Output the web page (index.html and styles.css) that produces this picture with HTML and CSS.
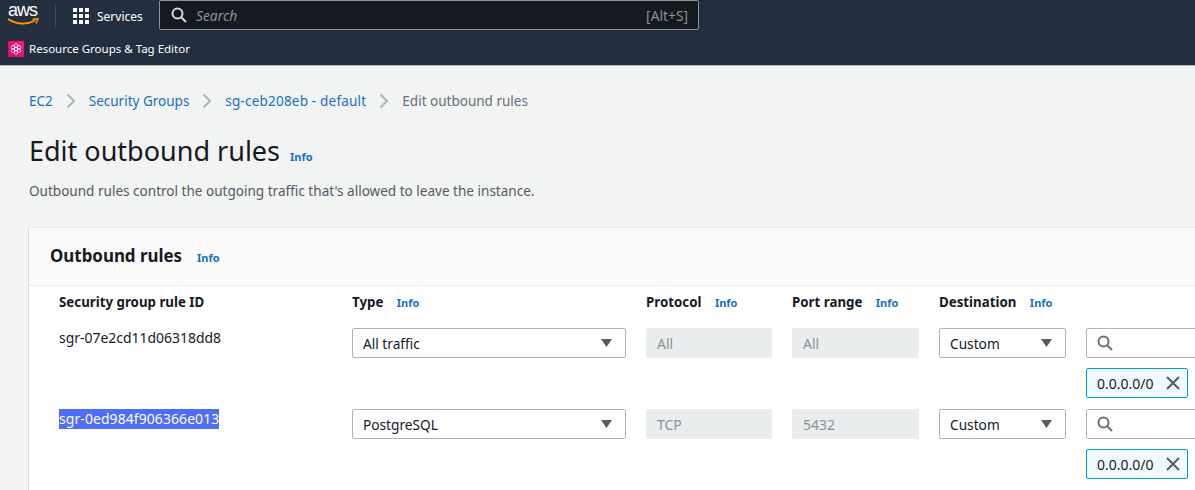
FILE: index.html
```html
<!DOCTYPE html>
<html lang="en">
<head>
<meta charset="UTF-8">
<title>Edit outbound rules</title>
<link rel="stylesheet" href="styles.css">
</head>
<body>
<header class="topbar">
  <div class="nav-row">
    <div class="aws-logo">
      <span class="aws-word">aws</span>
      <svg class="aws-smile" width="32" height="8" viewBox="0 0 32 8"><path d="M1 1C9 6.500 20 7 28 2.500" fill="none" stroke="#ff9900" stroke-width="1.800"/><path d="M25.500 1.200L31 .8L29 5.500" fill="none" stroke="#ff9900" stroke-width="1.500"/></svg>
    </div>
    <div class="nav-sep"></div>
    <div class="services">
      <svg width="16" height="16" viewBox="0 0 16 16" fill="#fff"><rect width="4" height="4"/><rect x="6" width="4" height="4"/><rect x="12" width="4" height="4"/><rect y="6" width="4" height="4"/><rect x="6" y="6" width="4" height="4"/><rect x="12" y="6" width="4" height="4"/><rect y="12" width="4" height="4"/><rect x="6" y="12" width="4" height="4"/><rect x="12" y="12" width="4" height="4"/></svg>
      <span>Services</span>
    </div>
    <div class="nav-search">
      <svg width="16" height="16" viewBox="0 0 16 16" fill="none" stroke="#d5dbdb" stroke-width="2"><circle cx="6.500" cy="6.500" r="5"/><path d="M10.500 10.500L15 15"/></svg>
      <span class="nav-search-text">Search</span>
      <span class="nav-search-key">[Alt+S]</span>
    </div>
  </div>
  <div class="fav-row">
    <span class="fav-icon">
      <svg width="12" height="12" viewBox="0 0 12 12" fill="none" stroke="#fff" stroke-width=".8"><circle cx="6" cy="6" r="1.800"/><circle cx="6" cy="2.600" r="1.800"/><circle cx="6" cy="9.400" r="1.800"/><circle cx="3" cy="4.300" r="1.800"/><circle cx="9" cy="4.300" r="1.800"/><circle cx="3" cy="7.700" r="1.800"/><circle cx="9" cy="7.700" r="1.800"/></svg>
    </span>
    <span>Resource Groups &amp; Tag Editor</span>
  </div>
</header>

<main class="content">
  <nav class="crumbs">
    <a>EC2</a>
    <svg class="crumb-arrow" width="10" height="16" viewBox="0 0 10 16"><path d="M1.500 1.500L8 8L1.500 14.500" fill="none" stroke="#aab7b8" stroke-width="2"/></svg>
    <a>Security Groups</a>
    <svg class="crumb-arrow" width="10" height="16" viewBox="0 0 10 16"><path d="M1.500 1.500L8 8L1.500 14.500" fill="none" stroke="#aab7b8" stroke-width="2"/></svg>
    <a class="crumb-group">sg-ceb208eb - default</a>
    <svg class="crumb-arrow" width="10" height="16" viewBox="0 0 10 16"><path d="M1.500 1.500L8 8L1.500 14.500" fill="none" stroke="#aab7b8" stroke-width="2"/></svg>
    <span class="crumb-current">Edit outbound rules</span>
  </nav>

  <div class="page-title">
    <h1>Edit outbound rules</h1>
    <a class="info">Info</a>
  </div>
  <p class="page-desc">Outbound rules control the outgoing traffic that's allowed to leave the instance.</p>

  <section class="card">
    <div class="card-head">
      <h2>Outbound rules</h2>
      <a class="info">Info</a>
    </div>
    <div class="rules">
      <div class="rule-grid rule-labels">
        <div class="label">Security group rule ID</div>
        <div class="label">Type <a class="info">Info</a></div>
        <div class="label">Protocol <a class="info">Info</a></div>
        <div class="label">Port range <a class="info">Info</a></div>
        <div class="label">Destination <a class="info">Info</a></div>
        <div></div>
      </div>

      <div class="rule-grid rule-row">
        <div class="rule-id"><span>sgr-07e2cd11d06318dd8</span></div>
        <div class="select">All traffic<svg class="caret" width="11" height="8" viewBox="0 0 12 8" preserveAspectRatio="none"><path d="M0 0H12L6 8Z" fill="#545b64"/></svg></div>
        <div class="readonly">All</div>
        <div class="readonly">All</div>
        <div class="select">Custom<svg class="caret" width="11" height="8" viewBox="0 0 12 8" preserveAspectRatio="none"><path d="M0 0H12L6 8Z" fill="#545b64"/></svg></div>
        <div class="dest">
          <div class="dest-input"><svg width="16" height="16" viewBox="0 0 16 16" fill="none" stroke="#687078" stroke-width="2"><circle cx="6.500" cy="6.500" r="5"/><path d="M10.500 10.500L15 15"/></svg></div>
          <div class="token">0.0.0.0/0<svg width="14" height="14" viewBox="0 0 14 14" fill="none" stroke="#545b64" stroke-width="2"><path d="M1 1L13 13M13 1L1 13"/></svg></div>
        </div>
      </div>

      <div class="rule-grid rule-row">
        <div class="rule-id"><span class="selected">sgr-0ed984f906366e013</span></div>
        <div class="select">PostgreSQL<svg class="caret" width="11" height="8" viewBox="0 0 12 8" preserveAspectRatio="none"><path d="M0 0H12L6 8Z" fill="#545b64"/></svg></div>
        <div class="readonly">TCP</div>
        <div class="readonly">5432</div>
        <div class="select">Custom<svg class="caret" width="11" height="8" viewBox="0 0 12 8" preserveAspectRatio="none"><path d="M0 0H12L6 8Z" fill="#545b64"/></svg></div>
        <div class="dest">
          <div class="dest-input"><svg width="16" height="16" viewBox="0 0 16 16" fill="none" stroke="#687078" stroke-width="2"><circle cx="6.500" cy="6.500" r="5"/><path d="M10.500 10.500L15 15"/></svg></div>
          <div class="token">0.0.0.0/0<svg width="14" height="14" viewBox="0 0 14 14" fill="none" stroke="#545b64" stroke-width="2"><path d="M1 1L13 13M13 1L1 13"/></svg></div>
        </div>
      </div>
    </div>
  </section>
</main>
</body>
</html>
```

FILE: styles.css
```css
html, body { margin: 0; height: 490px; overflow: hidden; }
body { font-family: "Noto Sans", sans-serif; font-size: 14px; color: #16191f; background: #f2f3f3; }
a { color: #1a6fc4; }

.topbar { background: #232f3e; color: #fff; height: 65px; border-bottom: 1px solid #aab7b8; }
.nav-row { display: flex; align-items: center; height: 32px; }
.aws-logo { width: 32px; margin-left: 7px; height: 32px; position: relative; }
.aws-word { display: block; font-family: "Liberation Sans", sans-serif; font-size: 18px; line-height: 20px; letter-spacing: -1px; padding-left: 1px; color: #fff; }
.aws-smile { position: absolute; left: 0; top: 18px; }
.nav-sep { width: 1px; height: 22px; background: #414d5c; margin: 0 17px 0 16px; }
.services { display: flex; align-items: center; gap: 8px; font-size: 12px; width: 86px; }
.nav-search { display: flex; align-items: center; height: 28px; margin-top: -2px; background: #16191f; border: 1px solid #879596; border-radius: 2px; padding: 0 10px 0 11px; width: 517px; }
.nav-search-text { font-size: 13.800px; font-style: italic; color: #879596; margin-left: 9px; flex: 1; }
.nav-search-key { font-size: 13.800px; color: #879596; }
.fav-row { display: flex; align-items: center; gap: 5px; height: 33px; padding-left: 8px; font-size: 11.500px; }
.fav-icon { display: flex; align-items: center; justify-content: center; width: 16px; height: 16px; background: linear-gradient(45deg, #e0085f, #f5197c); }

.content { padding: 0 0 0 29px; }
.crumbs { display: flex; align-items: center; height: 20px; padding-top: 25px; gap: 13px; font-size: 13.500px; }
.crumb-group { letter-spacing: .2px; }
.crumb-current { color: #687078; }
.page-title { display: flex; align-items: baseline; gap: 10px; margin-top: 22px; }
h1 { margin: 0; font-size: 27px; font-weight: 400; line-height: 36px; }
.info { font-size: 11px; font-weight: 700; }
.page-desc { margin: 12px 0 0; font-size: 13.550px; line-height: 20px; color: #545b64; }

.card { width: 1300px; margin: 26px 0 0 -1px; background: #fff; border-top: 1px solid #eaeded; border-left: 1px solid #d5dbdb; height: 300px; }
.card-head { display: flex; align-items: baseline; gap: 15px; height: 58px; box-sizing: border-box; padding: 16px 0 0 21px; background: #fafafa; border-bottom: 1px solid #eaeded; }
h2 { margin: 0; font-size: 16.900px; font-weight: 700; line-height: 24px; }
.rules { padding: 0 0 0 30px; }
.rule-grid { display: grid; grid-template-columns: 273px 274px 126px 127px 127px 140px; column-gap: 20px; }
.rule-labels { height: 42px; padding-top: 6px; box-sizing: border-box; line-height: 20px; }
.label { font-size: 13.300px; font-weight: 700; }
.label .info { margin-left: 10px; }
.rule-row { margin-bottom: 11px; align-items: start; }
.rule-id { line-height: 20px; font-size: 13.950px; }
.selected { background: #4f6df5; color: #fff; display: inline-block; letter-spacing: .1px; }
.select { display: flex; align-items: center; justify-content: space-between; height: 30px; box-sizing: border-box; padding: 0 13px 0 10px; background: #fff; border: 1px solid #aab7b8; border-radius: 2px; font-size: 13.700px; }
.readonly { display: flex; align-items: center; height: 30px; box-sizing: border-box; padding: 0 11px; background: #eaeded; border-radius: 2px; font-size: 14px; color: #879596; }
.dest-input { display: flex; align-items: center; height: 30px; box-sizing: border-box; padding-left: 10px; background: #fff; border: 1px solid #aab7b8; border-radius: 2px; }
.token { display: inline-flex; align-items: center; justify-content: space-between; width: 102px; height: 30px; box-sizing: border-box; margin-top: 10px; padding: 0 7px 0 10px; background: #f1faff; border: 1px solid #00a1c9; border-radius: 2px; font-size: 14px; }
```
